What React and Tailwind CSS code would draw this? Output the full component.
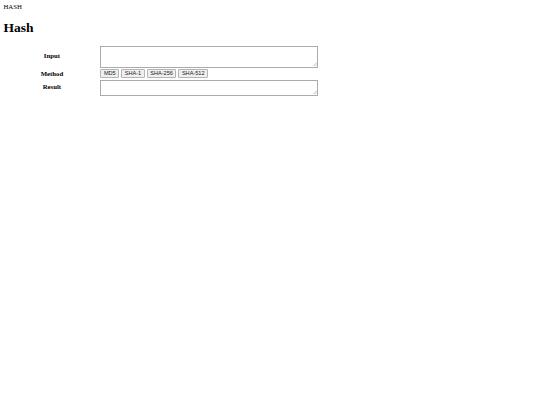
const methods = ["MD5", "SHA-1", "SHA-256", "SHA-512"];

function Grip() {
  return (
    <svg className="pointer-events-none absolute bottom-[1.5px] right-[1.5px]" width="4" height="4" viewBox="0 0 4 4">
      <path d="M4 0.5L0.5 4M4 2.5L2.5 4" stroke="#9a9a9a" strokeWidth="0.6" />
    </svg>
  );
}

function Box({ h }) {
  return (
    <div className="relative w-[218px]">
      <textarea className={`block w-[218px] resize-none border border-[#ababab] bg-white text-[6px] ${h}`} />
      <Grip />
    </div>
  );
}

export default function App() {
  return (
    <div className="min-h-screen bg-white p-[3.4px] font-['Liberation_Serif',serif] text-black">
      <div className="text-[6.75px] leading-[7.8px]">HASH</div>
      <h1 className="my-[9px] text-[13.5px] font-bold leading-[15.5px]">Hash</h1>

      <div className="grid grid-cols-[95px_218px] grid-rows-[22px_10px_16px] items-center gap-x-[1px] gap-y-[1px] pl-[1px] pt-[1px]">
        <div className="-mt-[1px] text-center text-[6.75px] font-bold">Input</div>
        <Box h="h-[22px]" />

        <div className="text-center text-[6.75px] font-bold">Method</div>
        <div className="flex items-center gap-[2px]">
          {methods.map((m) => (
            <button
              key={m}
              className="h-[9.5px] rounded-[1px] border border-[#b4b4b4] bg-[#efefef] px-[2.5px] font-['Liberation_Sans',sans-serif] text-[5.6px] leading-[6.5px] text-[#222]"
            >
              {m}
            </button>
          ))}
        </div>

        <div className="-mt-[1px] text-center text-[6.75px] font-bold">Result</div>
        <Box h="h-[16px]" />
      </div>
    </div>
  );
}
